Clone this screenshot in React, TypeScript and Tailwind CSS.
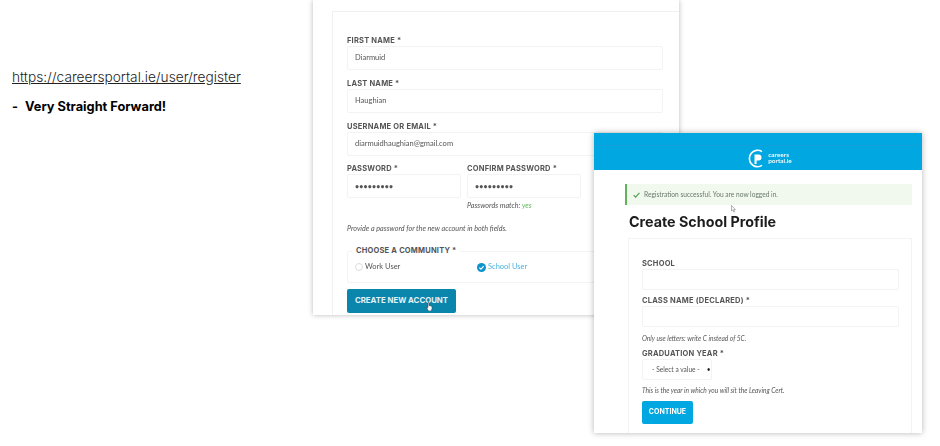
const labelCls = "h-[10px] text-[7.5px] leading-[10px] font-bold tracking-[0.2px] text-[#555] font-['Inter',sans-serif] whitespace-nowrap";
const inputCls = "flex items-center rounded-[2px] border border-[#f3f3f3] bg-white pl-[7px] text-[7.5px] text-[#555] font-['Lato',sans-serif] whitespace-nowrap";
const hintCls = "text-[7.2px] leading-[10px] italic text-[#555] font-['Lato',sans-serif] whitespace-nowrap";
const hintSmallCls = "text-[6.6px] leading-[10px] italic text-[#555] font-['Lato',sans-serif] whitespace-nowrap";

const Field = ({ label, value, className = "", dark = false }: { label: string; value?: string; className?: string; dark?: boolean }) => (
  <div className={className}>
    <div className={labelCls}>{label}</div>
    <div className={`${inputCls} h-[24px] ${dark ? "text-[#222] text-[7px] font-bold tracking-[0.2px]" : ""}`}>{value}</div>
  </div>
);

const RegisterWindow = () => (
  <div className="absolute left-[313px] top-0 h-[315px] w-[366px] overflow-hidden bg-white pl-[19px] pt-[11px] shadow-[0_0_5px_rgba(0,0,0,0.28)] blur-[0.3px]">
    <div className="h-full border-l border-t border-[#f0f0f0] pl-[14px] pr-[16px] pt-[24px]">
      <div className="flex flex-col gap-[9px]">
        <Field label="FIRST NAME *" value="Diarmuid" />
        <Field label="LAST NAME *" value="Haughian" />
        <Field label="USERNAME OR EMAIL *" value="diarmuidhaughian@gmail.com" />
        <div className="-mt-[1px] flex gap-[6px]">
          <Field className="w-[114px]" label="PASSWORD *" value="•••••••••" dark />
          <Field className="w-[114px]" label="CONFIRM PASSWORD *" value="•••••••••" dark />
        </div>
      </div>
      <div className={`${hintCls} mt-[3px] pl-[120px]`}>
        Passwords match: <span className="text-[#5cb85c]">yes</span>
      </div>
      <div className={`${hintCls} mt-[13px]`}>Provide a password for the new account in both fields.</div>
      <div className="relative mt-[17px] flex h-[32px] items-center rounded-[2px] border border-[#f3f3f3] pl-[7px] text-[7.5px] font-['Lato',sans-serif]">
        <div className={`${labelCls} absolute -top-[6px] left-[4px] bg-white px-[4px]`}>CHOOSE A COMMUNITY *</div>
        <div className="mr-[2px] h-[8px] w-[8px] rounded-full border border-[#ddd]" />
        <span className="w-[112px] text-[#555]">Work User</span>
        <svg width="9" height="9" viewBox="0 0 10 10" className="mr-[2px]">
          <circle cx="5" cy="5" r="5" fill="#0d93c9" />
          <path d="M2.6 5.1 4.4 6.9 7.5 3.5" fill="none" stroke="#fff" strokeWidth="1.3" />
        </svg>
        <span className="text-[#4db4dc]">School User</span>
      </div>
      <div className="relative mt-[6px] flex h-[24px] w-[109px] items-center justify-center rounded-[2px] bg-[#0a86ad] text-[7.8px] font-bold text-[#e4f2f7] font-['Inter',sans-serif] whitespace-nowrap">
        CREATE NEW ACCOUNT
        <svg width="7" height="9" viewBox="0 0 7 9" className="absolute left-[79px] top-[13px]">
          <path d="M2 0.5h1v3l3 .8v2.7l-1 2H2.5L.5 5.5 2 5.6z" fill="#fff" stroke="#333" strokeWidth="0.5" />
        </svg>
      </div>
    </div>
  </div>
);

const Logo = () => (
  <div className="ml-[24px] flex items-center gap-[2px]">
    <svg width="18" height="19" viewBox="0 0 18 19">
      <path d="M14 2.6A8.2 8.2 0 1 0 14 16.4" fill="none" stroke="#fff" strokeWidth="1.6" />
      <path d="M6.5 15V5.6h4a3 3 0 0 1 0 6H8.6V15z" fill="#fff" />
    </svg>
    <div className="text-[6.5px] leading-[6.5px] font-semibold text-white font-['Lato',sans-serif]">
      careers
      <br />
      portal.ie
    </div>
  </div>
);

const ProfileWindow = () => (
  <div className="absolute left-[594px] top-[133px] h-[300px] w-[328px] overflow-hidden bg-white shadow-[0_0_6px_rgba(0,0,0,0.3)] blur-[0.3px]">
    <div className="h-[13px] border-b border-[#14a0d6] bg-[#00a7e1]" />
    <div className="flex h-[24px] items-center justify-center bg-[#00a7e1]">
      <Logo />
    </div>
    <div className="pl-[31px] pr-[10px] pt-[14px]">
      <div className="relative flex h-[21px] items-center gap-[4px] border-l-[2px] border-[#5fb45a] bg-[#f1f8ee] pl-[6px] text-[6.6px] text-[#6a7a68] font-['Lato',sans-serif]">
        <svg width="7" height="6" viewBox="0 0 7 6">
          <path d="M0.6 3.2 2.6 5.2 6.4 0.8" fill="none" stroke="#4d9f49" strokeWidth="1.1" />
        </svg>
        Registration successful. You are now logged in.
        <svg width="5" height="8" viewBox="0 0 5 8" className="absolute left-[104px] top-[21px]">
          <path d="M.5.5v5.5l1.3-1.1 1 2.2.9-.4-1-2.1h1.7z" fill="#fff" stroke="#666" strokeWidth="0.5" />
        </svg>
      </div>
      <h1 className="mt-[8px] pl-[4px] text-[14.3px] leading-[18px] font-bold text-[#1c1c1c] font-['Inter',sans-serif]">Create School Profile</h1>
      <div className="ml-[3px] mt-[7px] h-[220px] border border-[#f3f3f3] pl-[13px] pr-[12px] pt-[20px]">
        <div className={labelCls}>SCHOOL</div>
        <div className={`${inputCls} h-[21px]`} />
        <div className={`${labelCls} mt-[6px]`}>CLASS NAME (DECLARED) *</div>
        <div className={`${inputCls} h-[21px]`} />
        <div className={`${hintSmallCls} mt-[6px]`}>Only use letters: write C instead of 5C.</div>
        <div className={`${labelCls} mt-[6px]`}>GRADUATION YEAR *</div>
        <div className={`${inputCls} h-[21px] w-[70px] gap-[7px] !text-[6.6px]`}>
          <span className="pl-[2px]">- Select a value -</span>
          <span className="text-[#222]">•</span>
        </div>
        <div className={`${hintSmallCls} mt-[5px]`}>This is the year in which you will sit the Leaving Cert.</div>
        <div className="mt-[6px] flex h-[23px] w-[51px] items-center justify-center rounded-[2px] bg-[#00a7e1] text-[7px] font-bold text-white font-['Inter',sans-serif]">
          CONTINUE
        </div>
      </div>
    </div>
  </div>
);

export default function App() {
  return (
    <div className="relative h-[446px] w-[940px] overflow-hidden bg-white">
      <div className="pl-[12px] pt-[64px] font-['Inter',sans-serif]">
        <a className="text-[13.7px] leading-[18px] font-light text-[#222] underline">
          https://careersportal.ie/user/register
        </a>
        <div className="mt-[10px] flex gap-[7px] text-[12.8px] leading-[18px] font-bold text-black">
          <span>-</span>
          <span>Very Straight Forward!</span>
        </div>
      </div>
      <RegisterWindow />
      <ProfileWindow />
    </div>
  );
}
